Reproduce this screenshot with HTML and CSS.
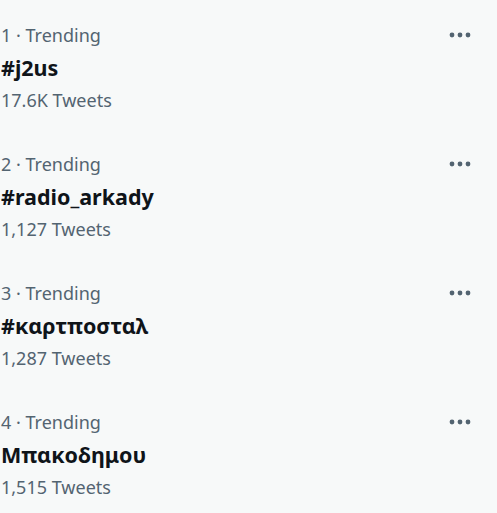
FILE: index.html
```html
<!DOCTYPE html>
<html>
<head>
<meta charset="utf-8">
<link rel="stylesheet" href="styles.css">
</head>
<body>
<div class="list">
  <div class="trend">
    <div class="meta"><span>1 · Trending</span><span class="more"><svg width="24" height="8" viewBox="0 0 24 8"><circle cx="4" cy="4" r="2.4"/><circle cx="12" cy="4" r="2.4"/><circle cx="20" cy="4" r="2.4"/></svg></span></div>
    <div class="title">#j2us</div>
    <div class="count">17.6K Tweets</div>
  </div>
  <div class="trend">
    <div class="meta"><span>2 · Trending</span><span class="more"><svg width="24" height="8" viewBox="0 0 24 8"><circle cx="4" cy="4" r="2.4"/><circle cx="12" cy="4" r="2.4"/><circle cx="20" cy="4" r="2.4"/></svg></span></div>
    <div class="title">#radio_arkady</div>
    <div class="count">1,127 Tweets</div>
  </div>
  <div class="trend">
    <div class="meta"><span>3 · Trending</span><span class="more"><svg width="24" height="8" viewBox="0 0 24 8"><circle cx="4" cy="4" r="2.4"/><circle cx="12" cy="4" r="2.4"/><circle cx="20" cy="4" r="2.4"/></svg></span></div>
    <div class="title">#καρτποσταλ</div>
    <div class="count">1,287 Tweets</div>
  </div>
  <div class="trend">
    <div class="meta"><span>4 · Trending</span><span class="more"><svg width="24" height="8" viewBox="0 0 24 8"><circle cx="4" cy="4" r="2.4"/><circle cx="12" cy="4" r="2.4"/><circle cx="20" cy="4" r="2.4"/></svg></span></div>
    <div class="title">Μπακοδημου</div>
    <div class="count">1,515 Tweets</div>
  </div>
</div>
</body>
</html>
```
FILE: styles.css
```css
html, body {
  margin: 0;
  padding: 0;
  background: #f7f9f9;
}
body {
  font-family: "Noto Sans", "Open Sans", sans-serif;
  color: #0f1419;
}
.list {
  padding-left: 1px;
  padding-right: 25px;
}
.trend {
  padding: 22px 0 17px;
}
.meta {
  height: 26px;
  line-height: 26px;
  font-size: 18px;
  color: #536471;
  display: flex;
  justify-content: space-between;
  align-items: center;
}
.more {
  display: flex;
  align-items: center;
}
.more svg {
  fill: #536471;
  display: block;
}
.title {
  height: 40px;
  line-height: 40px;
  font-size: 21.5px;
  font-weight: 700;
}
.count {
  height: 24px;
  line-height: 24px;
  font-size: 18px;
  color: #536471;
}
```
